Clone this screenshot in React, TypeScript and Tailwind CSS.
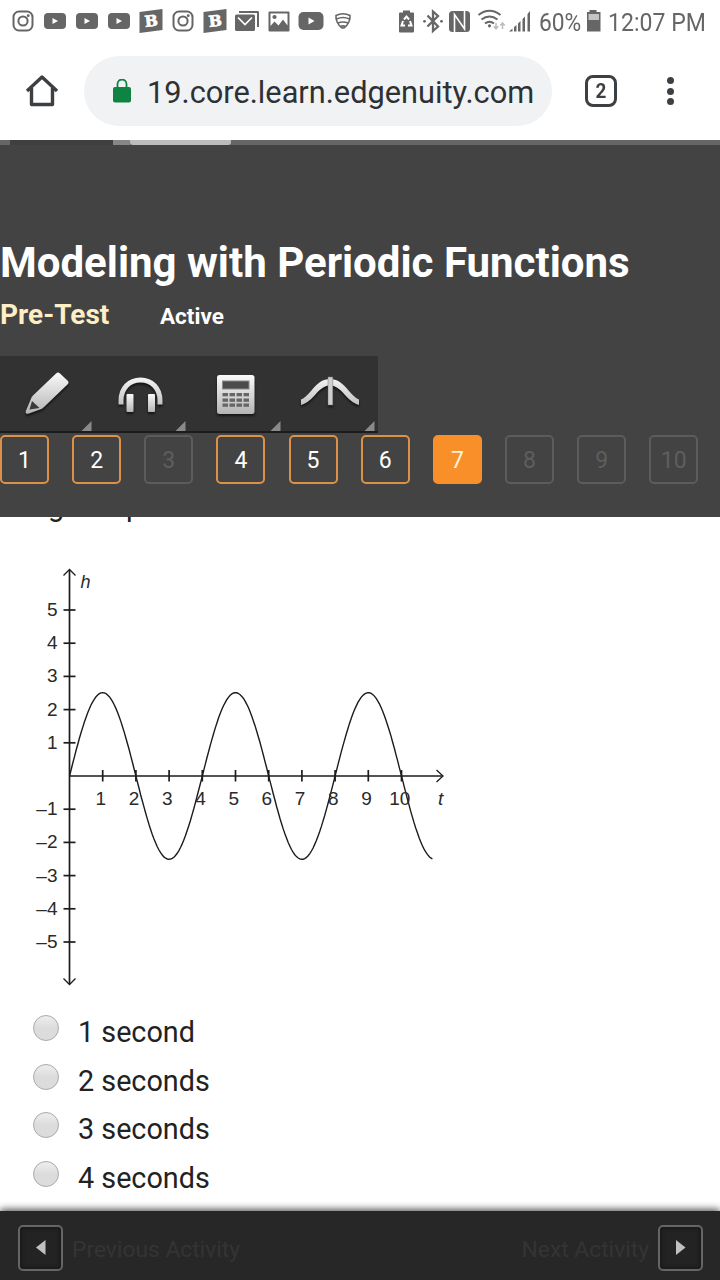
import type { ReactNode } from "react";

const ROBOTO = "font-['Roboto',sans-serif]";

const questions = [
  { n: 1, state: "done" },
  { n: 2, state: "done" },
  { n: 3, state: "locked" },
  { n: 4, state: "done" },
  { n: 5, state: "done" },
  { n: 6, state: "done" },
  { n: 7, state: "current" },
  { n: 8, state: "locked" },
  { n: 9, state: "locked" },
  { n: 10, state: "locked" },
];

const stateClass: Record<string, string> = {
  done: "border-[#dc9149] text-white",
  current: "border-[#f88f28] bg-[#f88f28] text-[#fff3dc]",
  locked: "border-[#5c5c5c] text-[#5e5e5e]",
};

const choices = ["1 second", "2 seconds", "3 seconds", "4 seconds"];

function Cell({ children }: { children: ReactNode }) {
  return (
    <svg width="32" height="32" viewBox="0 0 32 32" className="shrink-0" fill="#666">
      {children}
    </svg>
  );
}

function InstagramIcon() {
  return (
    <Cell>
      <g fill="none" stroke="#666">
        <rect x="6.5" y="6.5" width="19" height="19" rx="5.5" strokeWidth="2" />
        <circle cx="16" cy="16" r="4.6" strokeWidth="2" />
      </g>
      <circle cx="21.2" cy="10.7" r="1.4" />
    </Cell>
  );
}

function YoutubeIcon({ big = false }: { big?: boolean }) {
  return (
    <Cell>
      {big ? (
        <rect x="3.5" y="7" width="25" height="18" rx="5" />
      ) : (
        <rect x="5" y="8" width="22" height="16" rx="4" />
      )}
      <path d={big ? "M13.5 12.5v7l6-3.5z" : "M13.5 13v6l5.5-3z"} fill="#fff" />
    </Cell>
  );
}

function BrainlyIcon() {
  return (
    <Cell>
      <path d="M4.5 7 27.5 4v21L4.5 28z" />
      <text
        x="16.3"
        y="21.5"
        textAnchor="middle"
        transform="rotate(-6 16 16)"
        className="font-['DejaVu_Serif',serif] font-bold"
        fontSize="15.5"
        fill="#fff"
        stroke="#fff"
        strokeWidth="0.7"
      >
        B
      </text>
    </Cell>
  );
}

function MailIcon() {
  return (
    <Cell>
      <path d="M8 6h18.500a1.500 1.500 0 0 1 1.500 1.500V22h-2V8H8z" />
      <path d="M4 11q0-1.500 1.500-1.500h17q1.500 0 1.500 1.500v13.500q0 1.500-1.500 1.500h-17Q4 26 4 24.500z" />
      <path d="m7 12.500 7 7 7-7" fill="none" stroke="#fff" strokeWidth="1.700" />
    </Cell>
  );
}

function ImageIcon() {
  return (
    <Cell>
      <rect x="5.500" y="6.500" width="21" height="20" rx="1" />
      <path d="M7.500 8.500h17v12l-4.500-6-4.500 6-4-4-4 4.500z" fill="#fff" />
      <circle cx="11.500" cy="12" r="2.100" />
    </Cell>
  );
}

function FanIcon() {
  return (
    <Cell>
      <path
        d="M9 10.500q7-3.500 14 0c.5 4.500-2 9.500-5.500 12q-1.500 1-3 0C11 20 8.500 15 9 10.500zM9.500 14q6.500-3 13 0M11 18q5-2 10 0M13.500 21.300q2.500-.8 5 0"
        fill="none"
        stroke="#666"
        strokeWidth="1.600"
      />
    </Cell>
  );
}

function StatusBar() {
  return (
    <div className="flex h-[42px] items-start pt-[5px] pl-[7px]">
      <InstagramIcon />
      <YoutubeIcon />
      <YoutubeIcon />
      <YoutubeIcon />
      <BrainlyIcon />
      <InstagramIcon />
      <BrainlyIcon />
      <MailIcon />
      <ImageIcon />
      <YoutubeIcon big />
      <FanIcon />
      <svg width="136" height="32" viewBox="396 5 136 32" className="ml-[37px] shrink-0" fill="#666">
        {/* battery saver */}
        <path d="M403 10.500h7v2h3q1 0 1 1v18q0 1-1 1h-13q-1 0-1-1v-18q0-1 1-1h3z" />
        <path
          d="m404 19.500 2.500-3 2.500 3M403 21l-1.500 4.500h3.500M410 21l1.500 4.500H408"
          fill="none"
          stroke="#fff"
          strokeWidth="2"
        />
        {/* bluetooth */}
        <path
          d="m427.500 15.500 10.500 11-5 4.500V11.500l5 4.500-10.500 10.500"
          fill="none"
          stroke="#666"
          strokeWidth="2.300"
        />
        <circle cx="424.500" cy="21.300" r="1.400" />
        <circle cx="441.500" cy="21.300" r="1.400" />
        {/* nfc */}
        <rect x="449" y="11" width="21" height="21" rx="3.500" />
        <path d="M454.500 32V14.500L464.500 29V11" fill="none" stroke="#fff" strokeWidth="1.600" />
        {/* wifi with traffic arrows */}
        <g fill="none" stroke="#666" strokeWidth="2">
          <path d="M478.500 15q11-8.500 22 0M481.500 19.500q8-6 16 0M485 23.500q4.500-3.500 9 0" />
        </g>
        <circle cx="489.500" cy="25.800" r="1.600" />
        <path
          d="M496 23v5M493.800 26.300l2.200 2.500 2.200-2.500M502.500 29v-5M500.300 25.500l2.200-2.500 2.200 2.500"
          fill="none"
          stroke="#bbb"
          strokeWidth="1.500"
        />
        {/* signal */}
        <path d="M509 31.500l3.500-3v3zM514 27l2.500-2v6.500H514zM518 23.500l2.500-2.500v10.500H518zM522.500 19l2.500-2.500v15h-2.500zM527.500 14l2.500-3v20.500h-2.500z" />
      </svg>
      <span className="ml-[7px] w-[46px] whitespace-nowrap text-[26.500px] leading-[33px] text-[#666]">
        <span className="inline-block origin-left scale-x-[0.860]">60%</span>
      </span>
      <svg width="16" height="32" viewBox="585 5 16 32" className="shrink-0" fill="#666">
        <path d="M589.500 10h7v2h4v19.500H587V12h2.500z" />
        <path d="M588.500 14h10.500v6h-10.500z" fill="#c4c4c4" />
      </svg>
      <span className="ml-[7px] whitespace-nowrap text-[26.500px] leading-[33px] text-[#666]">
        <span className="inline-block origin-left scale-x-[0.870]">12:07 PM</span>
      </span>
    </div>
  );
}

function AddressBar() {
  return (
    <div className="flex h-[98px] items-start pt-[14px]">
      <svg width="34" height="34" viewBox="0 0 34 34" className="mt-[18px] ml-[25px] shrink-0">
        <path
          d="M2 17 17 3l15 14M6.500 14v16.500h21V14"
          fill="none"
          stroke="#3d4043"
          strokeWidth="3.400"
          strokeLinejoin="round"
        />
      </svg>
      <div className="ml-[25px] flex h-[70px] w-[468px] shrink-0 items-center rounded-full bg-[#f1f2f4] pl-[28px]">
        <svg width="20" height="24" viewBox="0 0 20 24" className="shrink-0">
          <rect x="1" y="8" width="18" height="15.500" rx="2" fill="#0f8442" />
          <path d="M5.500 9V5a4.500 4.500 0 0 1 9 0V9" fill="none" stroke="#0f8442" strokeWidth="1.800" />
        </svg>
        <span className="mt-[4px] ml-[15px] whitespace-nowrap text-[30.750px] text-[#2e3134]">
          19.core.learn.edgenuity.com
        </span>
      </div>
      <div className="mt-[19px] ml-[33px] flex h-8 w-8 shrink-0 items-center justify-center rounded-[8px] border-[3px] border-[#3d4043] pt-px text-[21px] leading-none font-bold text-[#3d4043]">
        <span className="scale-x-90">2</span>
      </div>
      <div className="mt-[21px] ml-[50px] flex flex-col gap-[3.500px]">
        <span className="h-[7px] w-[7px] rounded-full bg-[#3d4043]" />
        <span className="h-[7px] w-[7px] rounded-full bg-[#3d4043]" />
        <span className="h-[7px] w-[7px] rounded-full bg-[#3d4043]" />
      </div>
    </div>
  );
}

function Toolbar() {
  return (
    <div className="h-[77px] w-[378px] border-b-2 border-[#1c1c1c] bg-[#323232]">
      <svg width="378" height="75" viewBox="0 356 378 75">
        <defs>
          <linearGradient id="metal" x1="0" y1="0" x2="0" y2="1">
            <stop offset="0" stopColor="#fafafa" />
            <stop offset="1" stopColor="#b4b4b4" />
          </linearGradient>
          <linearGradient id="metalAbs" gradientUnits="userSpaceOnUse" x1="0" y1="375" x2="0" y2="412">
            <stop offset="0" stopColor="#fafafa" />
            <stop offset="1" stopColor="#b4b4b4" />
          </linearGradient>
        </defs>
        <g className="drop-shadow-[0_2px_1px_rgba(0,0,0,0.6)]">
          {/* pencil */}
          <path
            d="M56 373.500q2-2 4 0l7.500 7q2 2 0 4L44 407q-2 2-4 2.500l-11 4q-4.500 1-3-3L30.500 400q.5-2 2-4z"
            fill="url(#metal)"
          />
          <path d="M32 401 29.500 409.500l10-1.500z" fill="#3a3a3a" />
          {/* headphones */}
          <path
            d="M121 404.500v-4c0-12 8-20.500 19.500-20.500S160 388.500 160 400.500v4"
            fill="none"
            stroke="url(#metalAbs)"
            strokeWidth="5"
          />
          <rect x="126.500" y="394" width="7" height="18" rx="1" fill="url(#metal)" />
          <rect x="148" y="394" width="7" height="18" rx="1" fill="url(#metal)" />
          {/* calculator */}
          <rect x="217" y="375" width="37.500" height="39" rx="2.500" fill="url(#metal)" />
          <rect x="222.500" y="381" width="26.500" height="8" fill="#4c4c4c" stroke="#8a8a8a" />
          {[393, 398.5, 403.500].map((y) =>
            [222.5, 229.5, 236.5, 243.500].map((x) => (
              <rect key={`${x}-${y}`} x={x} y={y} width="5.500" height="3.300" fill="#666" />
            ))
          )}
          {/* graphing tool */}
          <path
            d="M301 403V399.500Q305 398 311 391C318 382.500 323 379 330 379S342 382.500 349 391Q355 398 359 399.500V405Q352 403 345 395C339 388 335 385.500 330 385.500S321 388 315 395Q308 403 301 405z"
            fill="url(#metalAbs)"
          />
          <path d="M328 377h4.800v28H328z" fill="#cfcfcf" stroke="#777" strokeWidth="0.500" />
        </g>
        <path
          d="M91.500 421v10H81.500zM185.500 421v10H175.500zM280.500 421v10H270.500zM374.500 421v10H364.500z"
          fill="#8a8a8a"
        />
      </svg>
    </div>
  );
}

function LessonHeader() {
  return (
    <header className="h-[377px] bg-[#434343]">
      <div className="flex h-[5px] bg-[#666]">
        <div className="ml-[10px] w-[103px] bg-[#3f3f3f]" />
        <div className="w-[17px] bg-[#868686]" />
        <div className="w-[101px] rounded-b-[3px] bg-[#bcbcbc]" />
      </div>
      <h1 className="mt-[93px] h-[50px] text-[42px] leading-[50px] font-bold whitespace-nowrap text-white">
        Modeling with Periodic Functions
      </h1>
      <div className="mt-[9px] flex h-[36px] items-baseline leading-[36px] font-bold">
        <span className="w-[160px] text-[28px] text-[#fdeec5]">Pre-Test</span>
        <span className="text-[22.500px] text-white">Active</span>
      </div>
      <div className="mt-[23px]">
        <Toolbar />
      </div>
      <div className="mt-[2px] flex gap-[23.150px]">
        {questions.map((q) => (
          <div
            key={q.n}
            className={`flex h-[49px] w-[49px] shrink-0 items-center justify-center rounded-[5px] border-2 pt-px text-[23px] leading-none ${stateClass[q.state]}`}
          >
            {q.n}
          </div>
        ))}
      </div>
    </header>
  );
}

const OX = 69.5;
const OY = 776;
const UNIT = 33.2;

const curve = Array.from({ length: 220 }, (_, i) => {
  const t = (i / 219) * 10.93;
  return `${(OX + t * UNIT).toFixed(1)},${(OY - 2.51 * UNIT * Math.sin((Math.PI * t) / 2)).toFixed(1)}`;
}).join(" ");

function Graph() {
  const xs = Array.from({ length: 10 }, (_, i) => i + 1);
  const ys = [5, 4, 3, 2, 1, -1, -2, -3, -4, -5];
  return (
    <svg
      width="450"
      height="440"
      viewBox="0 555 450 440"
      className="font-['Liberation_Sans',sans-serif]"
      fontSize="19"
      fill="#2a2a2a"
    >
      <g stroke="#1c1c1c" strokeWidth="1.700" fill="none">
        <path d={`M${OX} 570V984M${OX} ${OY}H443`} />
        <path d="M63.500 575.500 69.500 569.500l6 6M63.500 978.500l6 6 6-6M436.500 770l6.500 6-6.500 6" strokeWidth="1.300" />
        {xs.map((x) => (
          <path key={x} d={`M${OX + x * UNIT} ${OY - 6}v11.500`} />
        ))}
        {ys.map((y) => (
          <path key={y} d={`M63.500 ${OY - y * UNIT}h12`} />
        ))}
        <polyline points={curve} strokeWidth="1.400" />
      </g>
      {xs.map((x) => (
        <text key={x} x={OX + x * UNIT - 1.8} y="805" textAnchor="middle">
          {x}
        </text>
      ))}
      {ys.map((y) => (
        <text key={y} x="57.500" y={OY - y * UNIT + 6} textAnchor="end">
          {y < 0 ? `–${-y}` : y}
        </text>
      ))}
      <text x="80.500" y="588" fontStyle="italic" fontSize="18">
        h
      </text>
      <text x="438" y="805" fontStyle="italic">
        t
      </text>
    </svg>
  );
}

function Question() {
  return (
    <main className="h-[694px] bg-white">
      {/* tail of the question text scrolled under the header */}
      <div className="flex h-[6px] items-end overflow-hidden pl-[48px] text-[28.750px] leading-[34px] text-[#222]">
        <span className="w-[78px]">g</span>
        <span>p</span>
      </div>
      <div className="mt-[32px] h-[440px]">
        <Graph />
      </div>
      <div className="mt-[13px] flex flex-col">
        {choices.map((c) => (
          <label key={c} className="flex h-[48.700px] items-start pl-[33px]">
            <span className="mt-[7px] h-[26px] w-[26px] rounded-full border border-[#a9a9a9] bg-linear-to-b from-[#eee] to-[#dcdcdc] to-50%" />
            <span className="ml-[19px] text-[28.750px] leading-[48px] text-[#222]">{c}</span>
          </label>
        ))}
      </div>
    </main>
  );
}

function NavButton({ d }: { d: string }) {
  return (
    <button className="flex h-[46px] w-[45px] items-center justify-center rounded-[5px] border-2 border-[#656565] bg-[#232323] shadow-[inset_0_0_5px_#111]">
      <svg width="12" height="18" viewBox="0 0 12 18">
        <path d={d} fill="#c0c0c0" />
      </svg>
    </button>
  );
}

function ActivityFooter() {
  return (
    <footer className="relative flex h-[69px] items-start justify-between bg-[#272727] pt-[14px] pr-[17px] pl-[18px] text-[22.800px] leading-[49px] text-[#343434] shadow-[0_-2px_7px_rgba(0,0,0,0.65)]">
      <div className="flex gap-[9px]">
        <NavButton d="M10.500 1v15L1 8.500z" />
        <span>Previous Activity</span>
      </div>
      <div className="flex gap-[9px]">
        <span>Next Activity</span>
        <NavButton d="M1 1v15l9.500-7.500z" />
      </div>
    </footer>
  );
}

export default function App() {
  return (
    <div className={`h-[1280px] w-[720px] overflow-hidden bg-white ${ROBOTO}`}>
      <StatusBar />
      <AddressBar />
      <LessonHeader />
      <Question />
      <ActivityFooter />
    </div>
  );
}
